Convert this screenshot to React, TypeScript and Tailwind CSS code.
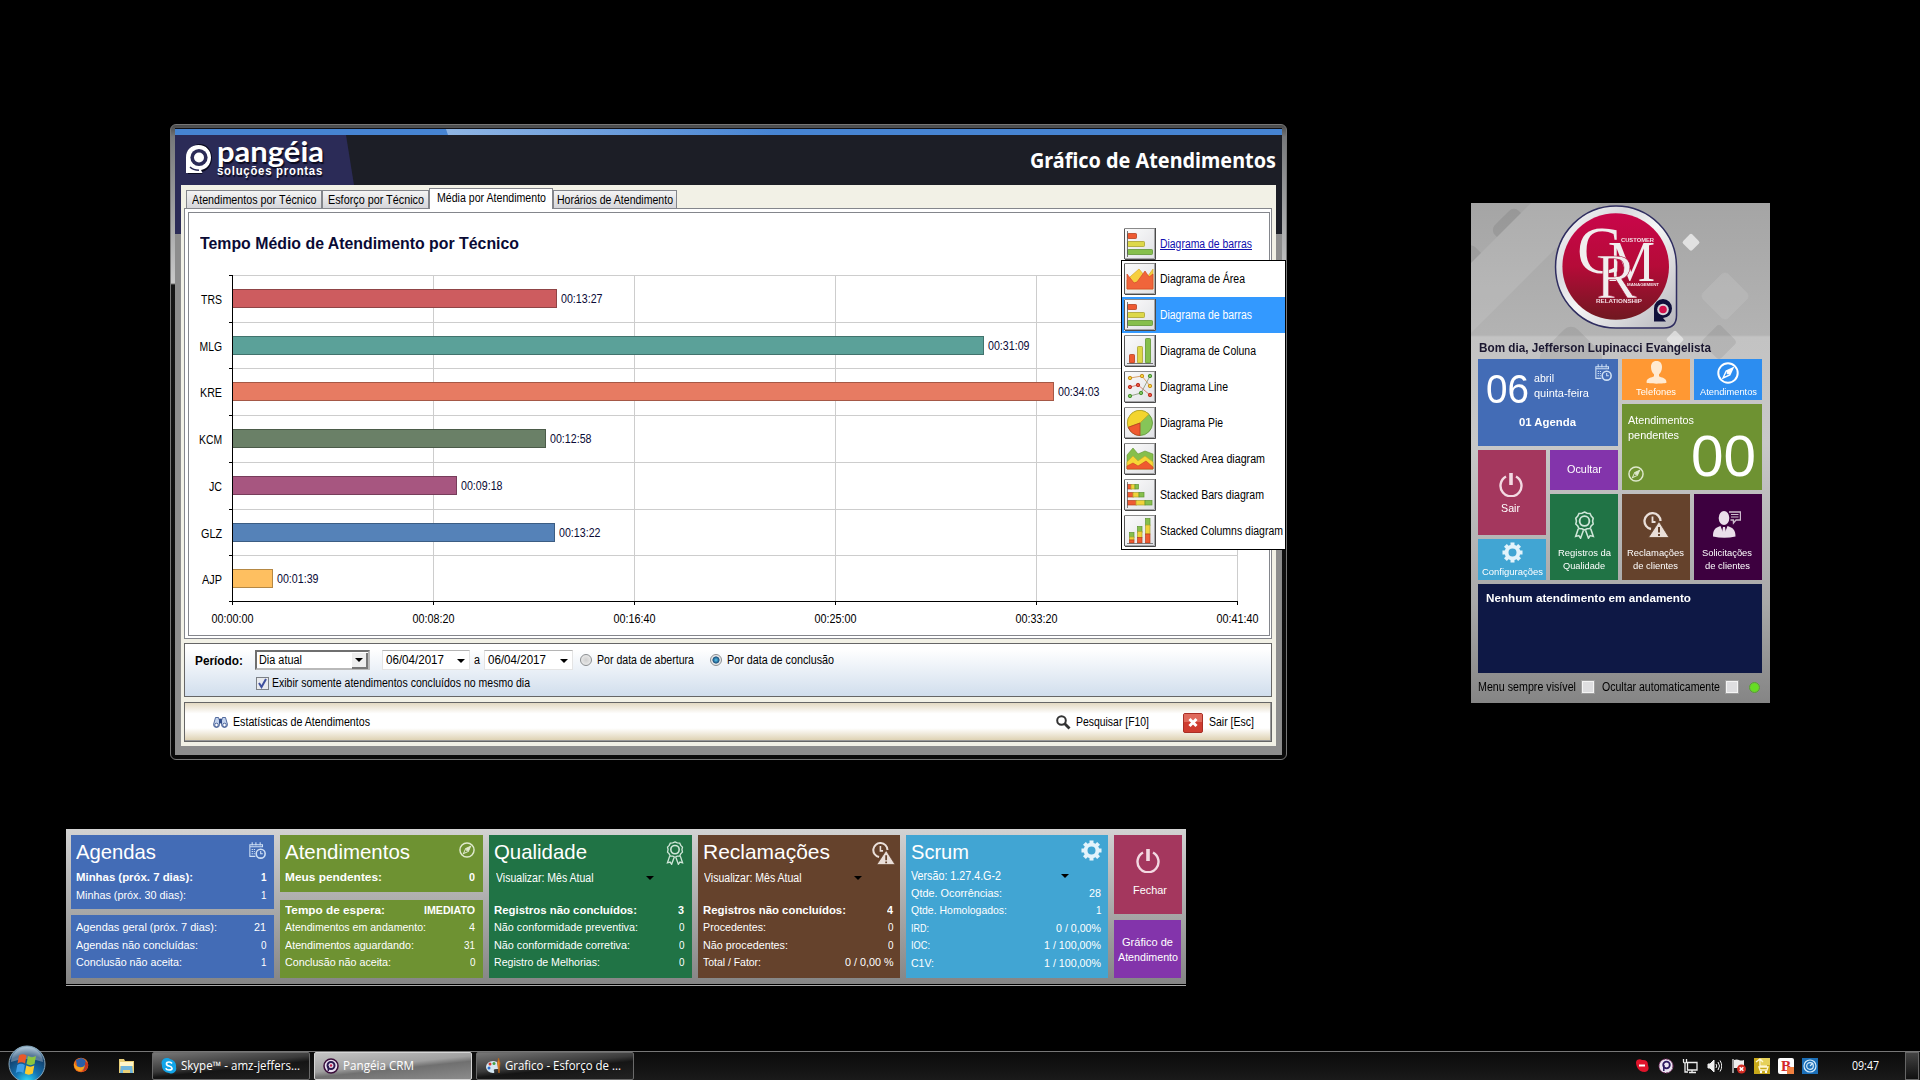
import React, { useLayoutEffect, useRef } from "react";

/* Text squeezed or stretched horizontally to an exact width */
function Fit({ w, className = "", children }: { w: number; className?: string; children: React.ReactNode }) {
  const ref = useRef<HTMLSpanElement>(null);
  useLayoutEffect(() => {
    const el = ref.current;
    if (!el) return;
    el.style.transform = "none";
    const natural = el.getBoundingClientRect().width;
    el.style.transform = `scaleX(${w / natural})`;
  }, [w, children]);
  return (
    <span className={"inline-block shrink-0 whitespace-nowrap text-left " + className} style={{ width: w }}>
      <span ref={ref} className="inline-block origin-left">
        {children}
      </span>
    </span>
  );
}

type Kind = "area" | "bars" | "columns" | "line" | "pie" | "sarea" | "sbars" | "scolumns";

const R = "#ee5a32";
const Y = "#f1d23a";
const G = "#86bf4c";

function ChartGlyph({ kind }: { kind: Kind }) {
  switch (kind) {
    case "area":
      return (
        <g strokeWidth="0.7">
          <path d="M3 26V17l4-4 8-7 5 6 4 1 5-7v20z" fill="#f6cf3f" stroke="#d9a92c" />
          <path d="M3 26V11l7 9 3-1 8-11 4 6 4-3v15z" fill="#f0653a" stroke="#d4472a" />
        </g>
      );
    case "bars":
      return (
        <g strokeWidth="0.8">
          <rect x="3.500" y="5.500" width="9" height="5" rx="0.800" fill={R} stroke="#b5401f" />
          <rect x="3.500" y="13.500" width="17" height="5" rx="0.800" fill="#ddd848" stroke="#a9a12f" />
          <rect x="3.500" y="21.500" width="25" height="5" rx="0.800" fill={G} stroke="#5f9433" />
          <path d="M3.500 3v26" stroke="#555" />
        </g>
      );
    case "columns":
      return (
        <g strokeWidth="0.8">
          <rect x="5.500" y="19.500" width="5" height="8.500" rx="0.800" fill={R} stroke="#b5401f" />
          <rect x="13.500" y="11.500" width="5" height="16.500" rx="0.800" fill="#ddd848" stroke="#a9a12f" />
          <rect x="21.500" y="3.500" width="5" height="24.500" rx="0.800" fill={G} stroke="#5f9433" />
          <path d="M3 28.500h26" stroke="#555" />
        </g>
      );
    case "line":
      return (
        <g strokeWidth="1" fill="none">
          <path d="M6 7l12-2 8 10" stroke="#d9a16a" />
          <path d="M6 16l8-2 12 10" stroke="#d98476" />
          <path d="M6 25l11-3 9-17" stroke="#9aa58d" />
          <g fill={Y} stroke="#c98f1f"><circle cx="6" cy="7" r="1.700" /><circle cx="18" cy="5" r="1.700" /><circle cx="26" cy="15" r="1.700" /></g>
          <g fill="#e7513d" stroke="#bb3527"><circle cx="6" cy="16" r="1.700" /><circle cx="14" cy="14" r="1.700" /><circle cx="26" cy="24" r="1.700" /></g>
          <g fill="#7cc15c" stroke="#4b9333"><circle cx="6" cy="25" r="1.700" /><circle cx="17" cy="22" r="1.700" /><circle cx="26" cy="5" r="1.700" /></g>
        </g>
      );
    case "pie":
      return (
        <g strokeWidth="0.8">
          <circle cx="16" cy="16" r="12.500" fill="#86c558" stroke="#5b8f34" />
          <path d="M16 16L4.200 20.300A12.500 12.500 0 0 1 25 7.300z" fill="#f3d52f" stroke="#b8a12a" />
          <path d="M16 16v12.500A12.500 12.500 0 0 1 4.200 20.300z" fill="#ef5a30" stroke="#b5401f" />
        </g>
      );
    case "sarea":
      return (
        <g strokeWidth="0.6">
          <path d="M3 26V12l6-7 5 6 7-3 8 3v15z" fill="#86bf4c" stroke="#5f9433" />
          <path d="M3 26v-7l6-6 5 5 7-5 8 6v7z" fill="#f6d736" stroke="#c9a52a" />
          <path d="M3 26v-3l6-3 5 3 8-5 7 6v2z" fill="#ef5a30" stroke="#c6431f" />
        </g>
      );
    case "sbars":
      return (
        <g strokeWidth="0.7">
          <rect x="3.500" y="5.500" width="4" height="4.500" fill={R} stroke="#b5401f" /><rect x="7" y="5.500" width="4" height="4.500" fill={Y} stroke="#a9a12f" /><rect x="11" y="5.500" width="3.500" height="4.500" fill={G} stroke="#5f9433" />
          <rect x="3.500" y="13.500" width="6" height="4.500" fill={R} stroke="#b5401f" /><rect x="9" y="13.500" width="6" height="4.500" fill={Y} stroke="#a9a12f" /><rect x="15" y="13.500" width="5" height="4.500" fill={G} stroke="#5f9433" />
          <rect x="3.500" y="21.500" width="9" height="4.500" fill={R} stroke="#b5401f" /><rect x="12" y="21.500" width="9" height="4.500" fill={Y} stroke="#a9a12f" /><rect x="21" y="21.500" width="7" height="4.500" fill={G} stroke="#5f9433" />
          <path d="M3.500 3v26" stroke="#555" />
        </g>
      );
    case "scolumns":
      return (
        <g strokeWidth="0.7">
          <rect x="5.500" y="17.500" width="4.500" height="5" fill={G} stroke="#5f9433" /><rect x="5.500" y="22" width="4.500" height="3" fill={Y} stroke="#a9a12f" /><rect x="5.500" y="25" width="4.500" height="3" fill={R} stroke="#b5401f" />
          <rect x="13.500" y="11.500" width="4.500" height="6" fill={G} stroke="#5f9433" /><rect x="13.500" y="16.500" width="4.500" height="6" fill={Y} stroke="#a9a12f" /><rect x="13.500" y="22.500" width="4.500" height="5.500" fill={R} stroke="#b5401f" />
          <rect x="21.500" y="3.500" width="4.500" height="7" fill={G} stroke="#5f9433" /><rect x="21.500" y="10" width="4.500" height="9" fill={Y} stroke="#a9a12f" /><rect x="21.500" y="19" width="4.500" height="9" fill={R} stroke="#b5401f" />
          <path d="M3 28.500h26" stroke="#555" />
        </g>
      );
  }
}

function ChartIcon({ kind }: { kind: Kind }) {
  return (
    <svg viewBox="0 0 32 32" className="size-8 shrink-0 bg-linear-to-br from-[#fcfcfc] to-[#dfe0e4]">
      <ChartGlyph kind={kind} />
      <path d="M0.500 31V0.500H31.500" fill="none" stroke="#8a8a8a" />
      <path d="M0.500 1V31" stroke="#555" />
      <path d="M31.500 0V31.500H1" fill="none" stroke="#4a4a4a" />
      <path d="M30.500 1V30.500H1" fill="none" stroke="#a5a5a8" />
    </svg>
  );
}

const MENU: { kind: Kind; label: string; w: number }[] = [
  { kind: "area", label: "Diagrama de Área", w: 85 },
  { kind: "bars", label: "Diagrama de barras", w: 92 },
  { kind: "columns", label: "Diagrama de Coluna", w: 96 },
  { kind: "line", label: "Diagrama Line", w: 68 },
  { kind: "pie", label: "Diagrama Pie", w: 63 },
  { kind: "sarea", label: "Stacked Area diagram", w: 105 },
  { kind: "sbars", label: "Stacked Bars diagram", w: 104 },
  { kind: "scolumns", label: "Stacked Columns diagram", w: 123 },
];

const BARS = [
  { id: "TRS", t: "00:13:27", s: 807, fill: "#cd5c5f", line: "#8f4446", lw: 21 },
  { id: "MLG", t: "00:31:09", s: 1869, fill: "#5ba199", line: "#41736d", lw: 22.5 },
  { id: "KRE", t: "00:34:03", s: 2043, fill: "#e77b62", line: "#a55846", lw: 22 },
  { id: "KCM", t: "00:12:58", s: 778, fill: "#6a8067", line: "#4b5b49", lw: 23 },
  { id: "JC", t: "00:09:18", s: 558, fill: "#a75680", line: "#773d5b", lw: 13 },
  { id: "GLZ", t: "00:13:22", s: 802, fill: "#5582b8", line: "#3c5d83", lw: 21 },
  { id: "AJP", t: "00:01:39", s: 99, fill: "#febf60", line: "#b58844", lw: 20 },
];
const ROW_Y = [275.5, 322.5, 368.5, 415.5, 462.5, 509.5, 555.5, 601.5];
const TICKS = ["00:00:00", "00:08:20", "00:16:40", "00:25:00", "00:33:20", "00:41:40"];

function BarChart() {
  return (
    <svg width="1080" height="373" viewBox="189 262 1080 373" className="block font-['Liberation_Sans',sans-serif] text-[12.5px]">
      {ROW_Y.slice(0, 7).map((y) => <path key={y} d={`M233 ${y}H1238`} stroke="#cdcdcd" />)}
      {TICKS.slice(1).map((t, i) => <path key={t} d={`M${433.5 + i * 201} 275V601`} stroke="#cdcdcd" />)}
      {ROW_Y.map((y) => <path key={y} d={`M229 ${y}H233`} stroke="#000" />)}
      {TICKS.map((t, i) => <path key={t} d={`M${232.5 + i * 201} 601V605`} stroke="#000" />)}
      {BARS.map((b, i) => {
        const len = Math.round((b.s * 201) / 500);
        const mid = (ROW_Y[i] + ROW_Y[i + 1]) / 2;
        const top = Math.floor(mid - 9.5) + 0.5;
        return (
          <g key={b.id}>
            <rect x="232.5" y={top} width={len} height="18" fill={b.fill} stroke={b.line} />
            <text x={232 + len + 5} y={top + 13.5} textLength="41.5" lengthAdjust="spacingAndGlyphs" fill="#0a0a35">{b.t}</text>
            <text x={222 - b.lw} y={top + 14} textLength={b.lw} lengthAdjust="spacingAndGlyphs">{b.id}</text>
          </g>
        );
      })}
      <path d="M232.5 275V602M229 601.5H1238" stroke="#000" />
      {TICKS.map((t, i) => (
        <text key={t} x={211.5 + i * 201} y="623" textLength="42" lengthAdjust="spacingAndGlyphs">{t}</text>
      ))}
    </svg>
  );
}

function Caret({ className = "" }: { className?: string }) {
  return (
    <svg width="8" height="4" viewBox="0 0 8 4" className={"shrink-0 " + className}>
      <path d="M0 0h8L4 4z" fill="#000" />
    </svg>
  );
}

function PangeiaLogo() {
  return (
    <div className="flex items-start">
      <svg width="27" height="32" viewBox="0 0 27 32" className="mt-2">
        <path d="M2 31V15a12 14 0 1 1 12 14l3 2z" fill="#0b0b20" />
        <path d="M0 30V14.5C0 7 5 2 12.5 2S25 7.5 25 14.5 20 26.5 15 27l1.500 3z" fill="#fff" />
        <circle cx="13" cy="14.500" r="8.600" fill="#2b2b57" />
        <path d="M4 24q3 3 9 3.200" stroke="#2b2b57" strokeWidth="1.500" fill="none" />
        <circle cx="13" cy="14.500" r="5" fill="#fff" />
      </svg>
      <div className="ml-1 flex flex-col text-white [text-shadow:1px_2px_1px_#0b0b20]">
        <Fit w={107} className="-mt-[2px] h-[29px] font-['Lato',sans-serif] text-[28px] leading-[36px] font-bold">pangéia</Fit>
        <Fit w={106} className="h-4 font-['Liberation_Sans',sans-serif] text-[12px] leading-[18px] font-bold tracking-[0.8px]">soluções prontas</Fit>
      </div>
    </div>
  );
}

function Tab({ label, w, width }: { label: string; w: number; width: string }) {
  return (
    <div className={"flex h-[19px] items-center justify-center border border-[#84868c] bg-linear-to-b from-[#f4f4f4] to-[#d6d6da] pt-px " + width}>
      <Fit w={w}>{label}</Fit>
    </div>
  );
}

function DateField({ w }: { w: string }) {
  return (
    <div className={"flex h-5 items-center justify-between border border-[#e4e4e4] border-t-[#b5b5b5] bg-white pr-1 pl-[3px] " + w}>
      <Fit w={58}>06/04/2017</Fit>
      <Caret className="mt-0.5" />
    </div>
  );
}

function ChartWindow() {
  return (
    <section className="absolute top-[124px] left-[170px] h-[636px] w-[1117px] rounded-[6px] border border-[#777] bg-[linear-gradient(#48494a_0,#77797b_12px,#c9c9c9_158px,#151515_160px,#0a0a0a)] p-1 pt-[3px] text-[12.5px] leading-[15px] text-black">
      <div className="h-[627px] border-t border-[#101015]">
        <div className="flex h-[6px] bg-[#4684d2]">
          <div className="ml-[271px] w-[330px] bg-linear-to-r from-[#8fb5e3] to-[#4684d2] [clip-path:polygon(0_0,100%_0,100%_100%,2px_100%)]" />
        </div>
        <header className="flex h-[50px] items-start justify-between bg-[#1c1e26] pr-[6px]">
          <div className="h-full w-[179px] bg-[#2b2b57] pl-[11px] [clip-path:polygon(0_0,171px_0,179px_100%,0_100%)]">
            <PangeiaLogo />
          </div>
          <Fit w={246} className="mt-[11px] font-['Noto_Sans',sans-serif] text-[21px] leading-[28px] font-bold text-white">Gráfico de Atendimentos</Fit>
        </header>
        <div className="bg-[linear-gradient(to_right,#2b2b57_50%,#1c1e26_50%)]">
          <div className="bg-[linear-gradient(transparent_49px,#8d8d8d_49px)] px-[6px] pb-[9px]">
            <div className="h-[561px] bg-[#f2f1e6] pl-[3px]">
              <div className="flex h-[24px] items-end pl-[2px]">
                <Tab label="Atendimentos por Técnico" w={124.5} width="w-[136px]" />
                <Tab label="Esforço por Técnico" w={96} width="w-[107px]" />
                <div className="relative z-10 flex h-[21px] w-[124px] items-start justify-center border border-b-0 border-[#84868c] bg-white pt-[2px]">
                  <Fit w={109}>Média por Atendimento</Fit>
                </div>
                <Tab label="Horários de Atendimento" w={116} width="w-[124px]" />
              </div>
              <div className="-mt-px h-[431px] w-[1088px] border border-[#84868c] bg-white p-[3px] pr-px">
                <div className="h-[424px] w-[1082px] border border-[#84868c]">
                  <div className="flex h-[49px] items-start justify-between pr-[17px] pl-[11px]">
                    <Fit w={319} className="mt-[20px] text-[16.5px] leading-[20px] font-bold text-[#0a0a35]">Tempo Médio de Atendimento por Técnico</Fit>
                    <div className="mt-[15px] flex items-center gap-1">
                      <ChartIcon kind="bars" />
                      <Fit w={92} className="text-[#1010b0] [&>span]:underline">Diagrama de barras</Fit>
                    </div>
                  </div>
                  <BarChart />
                </div>
              </div>
              <div className="mt-1 h-[54px] w-[1088px] border border-[#666] bg-linear-to-b from-white from-10% to-[#d1deed] pl-[10px]">
                <div className="mt-[6px] flex h-5 items-center">
                  <Fit w={48} className="mt-0.5 font-bold">Período:</Fit>
                  <div className="ml-3 flex h-5 w-[115px] items-center justify-between border-2 border-[#b9b9b9] border-t-[#6f6f6f] border-l-[#6f6f6f] bg-white pt-px pl-[2px]">
                    <Fit w={43}>Dia atual</Fit>
                    <span className="flex h-4 w-4 items-center justify-center border-r-2 border-b-2 border-[#777] bg-[#eee]"><Caret /></span>
                  </div>
                  <div className="ml-3 flex items-center">
                    <DateField w="w-[88px]" />
                    <Fit w={6} className="mx-[4px]">a</Fit>
                    <DateField w="w-[89px]" />
                  </div>
                  <span className="ml-[7px] size-3 rounded-full border border-[#8a8d90] bg-[radial-gradient(#cfcfcf,#f2f2f2)]" />
                  <Fit w={97} className="ml-[5px]">Por data de abertura</Fit>
                  <span className="ml-4 size-3 rounded-full border border-[#8a8d90] bg-[radial-gradient(#58c8f0_0,#1a4f7c_45%,#e8e8e8_55%)]" />
                  <Fit w={107} className="ml-[5px]">Por data de conclusão</Fit>
                </div>
                <div className="mt-[6px] flex items-center pl-[61px]">
                  <span className="size-[13px] border border-[#7b8086] bg-[#e8eaee]">
                    <svg viewBox="0 0 11 11" className="size-[11px]"><path d="M2 5l2.500 4L9 1" stroke="#3d4f9d" strokeWidth="2" fill="none" /></svg>
                  </span>
                  <Fit w={258} className="ml-[3px]">Exibir somente atendimentos concluídos no mesmo dia</Fit>
                </div>
              </div>
              <footer className="mt-[5px] flex h-10 w-[1088px] items-center border border-[#666] bg-[linear-gradient(#e3d9c2,#fff_28%,#fff_66%,#dccfae)] pt-px pr-[17px] pl-[28px] shadow-[inset_-1px_-1px_#999]">
                <svg width="15" height="13" viewBox="0 0 15 13" fill="#c3d3ee" stroke="#2e4a86" strokeWidth="0.800">
                  <path d="M2.500 1.500h3l1 3v4a3 3 0 1 1-6 0zM9.500 1.500h3l2 7a3 3 0 1 1-6 0v-4z" />
                  <circle cx="3.500" cy="9" r="1.800" fill="#fff" /><circle cx="11.500" cy="9" r="1.800" fill="#fff" />
                  <path d="M6.500 3h2v4h-2z" fill="#2e4a86" />
                </svg>
                <Fit w={137} className="ml-[5px]">Estatísticas de Atendimentos</Fit>
                <svg width="15" height="15" viewBox="0 0 15 15" fill="none" stroke="#333" className="ml-auto">
                  <circle cx="5.500" cy="5.500" r="4.300" strokeWidth="2" /><path d="M8.500 8.500l5 5" strokeWidth="2.800" />
                </svg>
                <Fit w={73} className="ml-[5px]">Pesquisar [F10]</Fit>
                <svg width="20" height="20" viewBox="0 0 20 20" className="ml-[34px]">
                  <rect x="0.500" y="0.500" width="19" height="19" rx="1.500" fill="#cf3c30" stroke="#a82f26" />
                  <path d="M1 1h18v8H1z" fill="#e06a5c" />
                  <path d="M6.500 6l7 7M13.500 6l-7 7" stroke="#fff" strokeWidth="3" />
                </svg>
                <Fit w={45} className="ml-[6px]">Sair [Esc]</Fit>
              </footer>
            </div>
          </div>
        </div>
      </div>
      <ul className="absolute top-[135px] left-[950px] z-20 w-[165px] border border-black bg-white">
        {MENU.map((m) => (
          <li key={m.kind} className={"flex h-9 items-center gap-1 pl-[2px] " + (m.kind === "bars" ? "bg-[#3399ff] text-white" : "")}>
            <ChartIcon kind={m.kind} />
            <Fit w={m.w}>{m.label}</Fit>
          </li>
        ))}
      </ul>
    </section>
  );
}

/* ---- tile icons ---- */
type IconProps = { className: string };

const CalendarClock = ({ className }: IconProps) => (
  <svg viewBox="0 0 16 16" className={className} fill="none" stroke="#cfe0f5">
    <path d="M6 13.500H.8V2.500h11.900V5M3 .3v3M6.500.3v3M10.500.3v3M.8 4.500h11.900" strokeWidth="1" />
    <path d="M2.500 7h4M2.500 9h3M2.500 11h3" strokeDasharray="1.200 .8" />
    <circle cx="11" cy="11" r="4.200" strokeWidth="1.500" /><path d="M11 8.500V11h2" />
  </svg>
);
const Compass = ({ className }: IconProps) => (
  <svg viewBox="0 0 22 22" className={className} fill="none" stroke="currentColor">
    <circle cx="11" cy="11" r="9.700" strokeWidth="2" />
    <path d="M16 6l-3.200 7L6 16l3.200-7z" strokeWidth="1.400" /><path d="M16 6l-3.200 7-3.600-4z" fill="currentColor" stroke="none" /><circle cx="11" cy="11" r="1" fill="currentColor" />
  </svg>
);
const Power = ({ className }: IconProps) => (
  <svg viewBox="0 0 24 24" className={className} fill="none" stroke="#f3d9e2" strokeWidth="2.400">
    <path d="M7 3.500a10.500 10.500 0 1 0 10 0" /><path d="M12 0v12" strokeWidth="3.600" />
  </svg>
);
const Gear = ({ className }: IconProps) => (
  <svg viewBox="0 0 22 22" className={className} fill="none" stroke="#e3f3fb">
    <circle cx="11" cy="11" r="6.200" strokeWidth="4" />
    {[0, 45, 90, 135, 180, 225, 270, 315].map((a) => (
      <path key={a} d="M11 .5v4" strokeWidth="4.200" transform={`rotate(${a} 11 11)`} />
    ))}
  </svg>
);
const Ribbon = ({ className }: IconProps) => (
  <svg viewBox="0 0 20 27" className={className} fill="none" stroke="#cfe6d8" strokeWidth="1.500">
    <path d="M10 1l2.500 1.200 2.800.2 1.200 2.500 1.900 2-.6 2.800.6 2.800-2 2-1.100 2.400-2.800.2L10 18.300l-2.500-1.200-2.800-.2-1.200-2.400-1.900-2 .6-2.800-.6-2.800 1.900-2L4.700 2.400l2.800-.2z" />
    <circle cx="10" cy="9.700" r="4.700" strokeWidth="1.800" />
    <path d="M4 17l-2.500 7.500 3-.8 1.700 2.500L9 18.500M16 17l2.500 7.500-3-.8-1.700 2.500L11 18.500" />
  </svg>
);
const ClockWarning = ({ className }: IconProps) => (
  <svg viewBox="0 0 26 26" className={className}>
    <path d="M8 17A8 8 0 1 1 17.500 9" fill="none" stroke="#eadfd9" strokeWidth="2.300" />
    <path d="M9.500 4.500V10h3" fill="none" stroke="#eadfd9" strokeWidth="1.800" />
    <path d="M16 9.500L26 25.500H5.500z" fill="#eadfd9" stroke="#65422c" strokeWidth="0.800" />
    <path d="M16 15v5.500M16 22v2" stroke="#65422c" strokeWidth="2" />
  </svg>
);
const Person = ({ className }: IconProps) => (
  <svg viewBox="0 0 21 23" className={className} fill="#ffead2">
    <path d="M10.500 0c4 0 5.500 2.700 5.500 6 0 3-1.200 6-3 7.300v2c2 1.500 7.500 1.200 7.500 6.200 0 1.500-20 1.500-20 0 0-5 5.500-4.700 7.500-6.200v-2C6.200 12 5 9 5 6c0-3.300 1.500-6 5.500-6z" />
  </svg>
);
const Client = ({ className }: IconProps) => (
  <svg viewBox="0 0 28 27" className={className} fill="#eadfea">
    <ellipse cx="11" cy="7" rx="5.300" ry="7" />
    <path d="M0 25.500c0-7 2-8.500 7.500-10.500l3.500 9 3.500-9c5.500 2 8 3.500 8 10.500q-11 2.500-22.500 0z" />
    <path d="M10 16h2l1 6-2 3-2-3z" />
    <path d="M16 1h11.500v8H23l-2.500 3-.2-3h-2.800" fill="none" stroke="#cdbccd" strokeWidth="1.400" />
    <path d="M18 3.500h7.500M18 6h7.500" stroke="#cdbccd" />
  </svg>
);

function CrmLogo() {
  return (
    <svg width="124" height="124" viewBox="1554 204.500 124 124" className="mt-px ml-[83px] block">
      <defs>
        <linearGradient id="crmRed" x1="0" y1="0" x2="0" y2="1"><stop offset="0" stopColor="#c9064a" /><stop offset=".5" stopColor="#b50b38" /><stop offset="1" stopColor="#701820" /></linearGradient>
        <linearGradient id="crmSilver" x1="0" y1="0" x2="1" y2="1"><stop offset="0" stopColor="#fff" /><stop offset=".3" stopColor="#d9d9de" /><stop offset=".5" stopColor="#f6f6f6" /><stop offset="1" stopColor="#b5b5bb" /></linearGradient>
      </defs>
      <path d="M1616 205.500A60.500 60.500 0 0 1 1676.500 266V315Q1676.500 327.500 1664 327.500H1616A60.500 61 0 0 1 1616 205.500z" fill="url(#crmSilver)" stroke="#2f2d60" strokeWidth="1.500" />
      <circle cx="1615.700" cy="266" r="53.300" fill="url(#crmRed)" />
      <g fill="#f1eeee" className="font-['Liberation_Serif',serif]">
        <text x="1577" y="272" fontSize="68" textLength="44" lengthAdjust="spacingAndGlyphs">C</text>
        <text x="1608" y="280" fontSize="56" textLength="47" lengthAdjust="spacingAndGlyphs">M</text>
        <text x="1596" y="297" fontSize="64" textLength="41" lengthAdjust="spacingAndGlyphs" stroke="#a80c35" strokeWidth="0.600">R</text>
      </g>
      <g fill="#f3dfe4" className="font-['Liberation_Sans',sans-serif] font-bold">
        <text x="1621" y="241" fontSize="4.500" textLength="33" lengthAdjust="spacingAndGlyphs">CUSTOMER</text>
        <text x="1627" y="285.500" fontSize="3.600" textLength="32" lengthAdjust="spacingAndGlyphs">MANAGEMENT</text>
        <text x="1596" y="302" fontSize="4.500" textLength="46" lengthAdjust="spacingAndGlyphs">RELATIONSHIP</text>
      </g>
      <path d="M1654 321v-13a9 9.500 0 1 1 9 9.500l3 3.500z" fill="#10103a" />
      <circle cx="1663" cy="309" r="5.800" fill="#d7d7dc" /><circle cx="1663" cy="309" r="3.800" fill="#d2124c" />
    </svg>
  );
}

function Checkbox() {
  return <span className="size-3 shrink-0 border border-[#f5f5f5] bg-[#dedee0] outline outline-[#a0a0a0]" />;
}

function SidePanel() {
  return (
    <aside className="absolute top-[203px] left-[1471px] h-[500px] w-[299px] overflow-hidden bg-[linear-gradient(#a5a5a5_0,#b3b3b3_132px,#c3c3c3_134px,#c8c8c8_240px,#a8a8a8_400px,#858585_500px)] text-white">
      <svg width="299" height="500" className="absolute inset-0" fill="#fff">
        <g opacity=".1">
          <rect x="26" y="10" width="34" height="34" rx="7" transform="rotate(45 43 27)" fill="#222" />
          <rect x="-18" y="46" width="34" height="34" rx="8" transform="rotate(45 -1 63)" fill="#222" />
          <rect x="6" y="77" width="13" height="13" rx="2" transform="rotate(45 12 84)" fill="#000" />
          <rect x="236" y="75" width="36" height="36" rx="5" transform="rotate(45 254 93)" />
          <rect x="75" y="130" width="50" height="50" rx="10" transform="rotate(45 100 155)" fill="#333" />
          <rect x="235" y="126" width="26" height="26" rx="4" transform="rotate(45 248 139)" fill="#333" />
          <path d="M0 60L60 0h70L0 130z" />
        </g>
        <rect x="213" y="33" width="13" height="13" rx="2" transform="rotate(45 220 40)" opacity=".65" />
        <rect x="197" y="130" width="13" height="13" rx="2" transform="rotate(45 204 137)" opacity=".5" />
      </svg>
      <div className="relative">
        <div className="h-[134px] pt-px"><CrmLogo /></div>
        <Fit w={232} className="ml-2 block! h-[22px] text-[13.5px] leading-[22px] font-bold text-[#1b1730]">Bom dia, Jefferson Lupinacci Evangelista</Fit>
        <div className="ml-[7px] grid w-[284px] grid-cols-4 grid-rows-[41px_42px_40px_41px_41px_89px] gap-1">
          <div className="relative col-span-2 row-span-2 bg-[#436cb6]">
            <div className="flex items-center pt-[11px] pl-2">
              <Fit w={43} className="text-[40px] leading-[38px]">06</Fit>
              <div className="-mt-[6px] ml-[5px] flex flex-col text-[11.5px] leading-[15px]">
                <Fit w={20}>abril</Fit>
                <Fit w={55}>quinta-feira</Fit>
              </div>
            </div>
            <Fit w={57} className="mt-[6px] ml-[41px] block! text-[11.5px] leading-4 font-bold">01 Agenda</Fit>
            <CalendarClock className="absolute top-[5px] right-[6px] size-[17px]" />
          </div>
          <div className="flex flex-col items-center bg-[#ff9833] pt-[2px]">
            <Person className="h-[23px] w-[21px]" />
            <Fit w={40} className="mt-0.5 text-[9.5px] leading-3">Telefones</Fit>
          </div>
          <div className="flex flex-col items-center bg-[#2c8df0] pt-[3px]">
            <Compass className="size-[22px]" />
            <Fit w={57} className="mt-0.5 text-[9.5px] leading-3">Atendimentos</Fit>
          </div>
          <div className="relative col-span-2 row-span-2 bg-[#6e9232] pt-[9px] pl-[6px] text-[11.5px] leading-[15px]">
            <Fit w={66} className="block!">Atendimentos</Fit>
            <Fit w={51} className="block!">pendentes</Fit>
            <Fit w={65} className="absolute right-[6px] bottom-[7px] text-[58px] leading-[54px]">00</Fit>
            <Compass className="absolute bottom-2 left-[6px] size-4 text-[#dfe9cd]" />
          </div>
          <div className="row-span-2 flex flex-col items-center bg-[#a4375e] pt-[23px] pr-[3px]">
            <Power className="size-6" />
            <Fit w={19} className="mt-[3px] text-[11.5px] leading-4">Sair</Fit>
          </div>
          <div className="flex items-center justify-center bg-[#8334ab]">
            <Fit w={35} className="text-[11.5px]">Ocultar</Fit>
          </div>
          <div className="row-span-2 flex flex-col items-center bg-[#207345] pt-[17px] text-[9.5px] leading-[13px]">
            <Ribbon className="h-[28px] w-[21px]" />
            <Fit w={53} className="mt-[7px]">Registros da</Fit>
            <Fit w={42}>Qualidade</Fit>
          </div>
          <div className="row-span-2 flex flex-col items-center bg-[#65422c] pt-[18px] pr-px text-[9.5px] leading-[13px]">
            <ClockWarning className="size-[26px]" />
            <Fit w={57} className="mt-[8px]">Reclamações</Fit>
            <Fit w={45}>de clientes</Fit>
          </div>
          <div className="row-span-2 flex flex-col items-center bg-[#3d003f] pt-[17px] pr-[2px] text-[9.5px] leading-[13px]">
            <Client className="h-[27px] w-[28px]" />
            <Fit w={50} className="mt-[8px]">Solicitações</Fit>
            <Fit w={45}>de clientes</Fit>
          </div>
          <div className="flex flex-col items-center bg-[#41a5d3] pt-[3px]">
            <Gear className="size-[21px]" />
            <Fit w={61} className="mt-[3px] text-[9.5px] leading-3">Configurações</Fit>
          </div>
          <div className="col-span-4 bg-[#0e1845] pt-[6px] pl-2">
            <Fit w={205} className="block! text-[11.5px] leading-4 font-bold">Nenhum atendimento em andamento</Fit>
          </div>
        </div>
        <div className="mt-[6px] ml-[7px] flex items-center text-[12.5px] leading-4 text-black">
          <Fit w={98}>Menu sempre visível</Fit>
          <span className="ml-[6px] flex"><Checkbox /></span>
          <Fit w={118} className="ml-[8px]">Ocultar automaticamente</Fit>
          <span className="ml-[6px] flex"><Checkbox /></span>
          <span className="ml-3 size-[9px] rounded-full bg-[#66dd22] outline outline-[#55a52c]" />
        </div>
      </div>
    </aside>
  );
}

type Line = { l: string; w: number; v?: string; vw?: number; bold?: boolean };

function Rows({ lines, className = "" }: { lines: Line[]; className?: string }) {
  return (
    <div className={"flex flex-col text-[11.5px] leading-[17.5px] " + className}>
      {lines.map((r) => (
        <div key={r.l} className={"flex justify-between " + (r.bold ? "font-bold" : "")}>
          <Fit w={r.w}>{r.l}</Fit>
          {r.v && <Fit w={r.vw ?? 5.5}>{r.v}</Fit>}
        </div>
      ))}
    </div>
  );
}

function TileHead({ title, w, children }: { title: string; w: number; children: React.ReactNode }) {
  return (
    <div className="flex h-[33px] items-start justify-between">
      <Fit w={w} className="mt-1 text-[21px] leading-[26px]">{title}</Fit>
      {children}
    </div>
  );
}

function Select({ label, w, gap }: { label: string; w: number; gap: string }) {
  return (
    <div className="flex items-center text-[12.5px] leading-4">
      <Fit w={w}>{label}</Fit>
      <Caret className={gap} />
    </div>
  );
}

function StatusBar() {
  return (
    <section className="absolute top-[829px] left-[66px] flex h-[155px] w-[1120px] items-start gap-[6px] bg-linear-to-b from-[#d2d2d2] to-[#858585] pt-[6px] pl-[5px] text-white shadow-[0_1px_#000,0_2px_#aaa]">
      <div className="flex w-[203px] flex-col gap-[6px]">
        <div className="h-[74px] bg-[#436cb6] px-[5px] pr-2">
          <TileHead title="Agendas" w={80}><CalendarClock className="mt-[7px] size-[17px]" /></TileHead>
          <Rows className="mt-px" lines={[{ l: "Minhas (próx. 7 dias):", w: 117, v: "1", bold: true }, { l: "Minhas (próx. 30 dias):", w: 110, v: "1" }]} />
        </div>
        <div className="h-[63px] bg-[#436cb6] px-[5px] pt-[4px] pr-2">
          <Rows lines={[{ l: "Agendas geral (próx. 7 dias):", w: 141, v: "21", vw: 12 }, { l: "Agendas não concluídas:", w: 122, v: "0" }, { l: "Conclusão não aceita:", w: 106, v: "1" }]} />
        </div>
      </div>
      <div className="flex w-[203px] flex-col gap-2">
        <div className="h-[57px] bg-[#6e9232] px-[5px] pr-2">
          <TileHead title="Atendimentos" w={125}><Compass className="mt-[7px] size-4 text-[#dfe9cd]" /></TileHead>
          <Rows className="mt-px" lines={[{ l: "Meus pendentes:", w: 97, v: "0", vw: 6, bold: true }]} />
        </div>
        <div className="h-[78px] bg-[#6e9232] px-[5px] pt-[1.5px] pr-2">
          <Rows lines={[{ l: "Tempo de espera:", w: 100, v: "IMEDIATO", vw: 51, bold: true }, { l: "Atendimentos em andamento:", w: 141, v: "4", vw: 6 }, { l: "Atendimentos aguardando:", w: 129, v: "31", vw: 11 }, { l: "Conclusão não aceita:", w: 106, v: "0" }]} />
        </div>
      </div>
      <div className="h-[143px] w-[203px] bg-[#207345] px-[5px] pr-2">
        <TileHead title="Qualidade" w={93}><Ribbon className="mt-[6px] h-6 w-[18px]" /></TileHead>
        <div className="mt-[2px] pl-[2px]"><Select label="Visualizar: Mês Atual" w={97.5} gap="ml-[52px]" /></div>
        <Rows className="mt-[15.5px]" lines={[{ l: "Registros não concluídos:", w: 143, v: "3", vw: 6, bold: true }, { l: "Não conformidade preventiva:", w: 144, v: "0" }, { l: "Não conformidade corretiva:", w: 136, v: "0" }, { l: "Registro de Melhorias:", w: 106, v: "0" }]} />
      </div>
      <div className="h-[143px] w-[202px] bg-[#65422c] px-[5px] pr-[7px]">
        <TileHead title="Reclamações" w={127}><ClockWarning className="mt-[7px] -mr-0.5 size-[23px]" /></TileHead>
        <div className="mt-[2px] pl-px"><Select label="Visualizar: Mês Atual" w={97.5} gap="ml-[52px]" /></div>
        <Rows className="mt-[15.5px]" lines={[{ l: "Registros não concluídos:", w: 143, v: "4", vw: 6, bold: true }, { l: "Procedentes:", w: 63, v: "0" }, { l: "Não procedentes:", w: 85, v: "0" }, { l: "Total / Fator:", w: 58, v: "0 / 0,00 %", vw: 48.5 }]} />
      </div>
      <div className="h-[143px] w-[202px] bg-[#41a5d3] px-[5px] pr-[7px]">
        <TileHead title="Scrum" w={58}><Gear className="mt-[5px] -mr-px size-[21px]" /></TileHead>
        <Select label="Versão: 1.27.4.G-2" w={90} gap="ml-[60px]" />
        <Rows className="mt-[0.5px]" lines={[{ l: "Qtde. Ocorrências:", w: 91, v: "28", vw: 12 }, { l: "Qtde. Homologados:", w: 96, v: "1" }, { l: "IRD:", w: 18, v: "0 / 0,00%", vw: 45 }, { l: "IOC:", w: 19, v: "1 / 100,00%", vw: 57 }, { l: "C1V:", w: 23, v: "1 / 100,00%", vw: 57 }]} />
      </div>
      <div className="flex w-[68px] flex-col gap-[6px] text-[11.5px]">
        <div className="flex h-[79px] flex-col items-center bg-[#a4375e] pt-[14px]">
          <Power className="size-6" />
          <Fit w={34} className="mt-[9px] ml-[3px] leading-4">Fechar</Fit>
        </div>
        <div className="flex h-[58px] w-[67px] flex-col items-center justify-center bg-[#8334ab] pt-0.5 leading-[15px]">
          <Fit w={51}>Gráfico de</Fit>
          <Fit w={60}>Atendimento</Fit>
        </div>
      </div>
    </section>
  );
}

function TaskButton({ label, w, active, width, children }: { label: string; w: number; active?: boolean; width: string; children: React.ReactNode }) {
  return (
    <div
      className={
        "flex h-7 items-center gap-1 rounded-[2px] border pl-[8px] " + width + " " +
        (active
          ? "border-[#d5d5d5] bg-[linear-gradient(174deg,#c4c4c4,#a0a0a0_45%,#707070_58%,#8c8c8c)]"
          : "border-[#6a6a6a] bg-[linear-gradient(174deg,#777,#3a3a3a_45%,#151515_58%,#222)]")
      }
    >
      {children}
      <Fit w={w} className="-mt-px text-white">{label}</Fit>
    </div>
  );
}

function Taskbar() {
  return (
    <footer className="absolute bottom-0 left-0 flex h-[29px] w-full items-start border-t border-[#777] bg-linear-to-b from-[#0b0b0b] to-[#1a1a1a] font-['Open_Sans',sans-serif] text-[12px] leading-4">
      <svg width="38" height="38" viewBox="0 0 38 38" className="-mt-[7px] ml-2 shrink-0">
        <defs>
          <radialGradient id="orb" cx=".5" cy="1" r="1"><stop offset="0" stopColor="#2fe0ff" /><stop offset=".35" stopColor="#1575b5" /><stop offset=".75" stopColor="#123f6b" /><stop offset="1" stopColor="#9fc0d6" /></radialGradient>
        </defs>
        <circle cx="19" cy="19" r="18" fill="url(#orb)" stroke="#87a6ba" />
        <path d="M3 17a16 15 0 0 1 32 0q-16-6-32 0z" fill="#fff" opacity=".3" />
        <path d="M11 10.500q4-2.500 7.500 0l-1.500 8q-4-2.300-7.500 0z" fill="#e8592a" />
        <path d="M20 11q4 2.300 8 0l-1.500 8q-4 2.300-8 0z" fill="#8cc63f" />
        <path d="M9.300 20q3.600-2.300 7.500 0l-1.500 8q-4-2.300-7.500 0z" fill="#3f9fe8" />
        <path d="M18.300 20.500q4 2.300 8 0l-1.500 8q-4 2.300-8 0z" fill="#fccb2f" />
      </svg>
      <svg width="16" height="16" viewBox="0 0 16 16" className="mt-[5px] ml-[27px] shrink-0">
        <circle cx="8" cy="8" r="7.300" fill="#e8661b" /><path d="M8 1a6 6 0 0 1 5 4 5 5 0 1 1-9 4L3 3z" fill="#2b5fa8" /><path d="M1 4q0 5 5 6 4 1 6-2-1 6-6 6-6-2-5-10z" fill="#f7a11b" /><path d="M15 6q1 7-6 9 4-4 3-10z" fill="#c8321b" />
      </svg>
      <svg width="17" height="16" viewBox="0 0 17 16" className="mt-[6px] ml-[29px] shrink-0">
        <path d="M1 1h5l1 2h9v12H1z" fill="#e9cf78" /><path d="M2 4h13v4H2z" fill="#fff6c8" /><path d="M3 8h11l1 7h-3v-3H5v3H2z" fill="#6fb6dd" />
      </svg>
      <div className="ml-[17px] flex gap-[4px]">
        <TaskButton label="Skype™ - amz-jeffers..." w={119} width="w-[158px]">
          <svg width="16" height="16" viewBox="0 0 16 16"><path d="M5 0a5 5 0 0 1 4 1 7 7 0 0 1 6 8 5 5 0 0 1-7 6A7 7 0 0 1 1 7 5 5 0 0 1 5 0z" fill="#12a5e8" /><path d="M11 5.500Q10 4 8 4 5.500 4 5.500 5.800T8 8t3 2.200T8 12q-2.500 0-3.200-1.800" stroke="#fff" strokeWidth="1.700" fill="none" /></svg>
        </TaskButton>
        <TaskButton label="Pangéia CRM" w={71} width="w-[158px]" active>
          <svg width="16" height="16" viewBox="0 0 16 16"><circle cx="8" cy="8" r="7" fill="#e9dff0" stroke="#3a0d3a" strokeWidth="1.500" /><circle cx="8" cy="7.500" r="3.500" fill="none" stroke="#2b1a50" strokeWidth="2" /><path d="M5.300 8v5" stroke="#2b1a50" strokeWidth="1.500" /><circle cx="8" cy="7.500" r="1.200" fill="#c3204c" /></svg>
        </TaskButton>
        <TaskButton label="Grafico - Esforço de ..." w={116} width="w-[158px]">
          <svg width="16" height="16" viewBox="0 0 16 16"><path d="M8 3a7 6 0 1 0 0 12q2 0 1-2t2-2h3V6Q12 3 8 3z" fill="#d5e7f2" /><circle cx="5" cy="6" r="1.500" fill="#d8382c" /><circle cx="9" cy="5.500" r="1.500" fill="#44a044" /><circle cx="4" cy="10" r="1.500" fill="#2d6fd0" /><path d="M13.500 0l1.500 5-1 10-1.500-10z" fill="#e88b2b" stroke="#b5641b" strokeWidth=".8" /></svg>
        </TaskButton>
      </div>
      <div className="ml-auto flex h-7 items-center gap-2">
        <svg width="16" height="16" viewBox="0 0 16 16"><path d="M3 2q3-1.500 5 0 6-.5 6 5 2 6-3 7-6 0-8-5-2-5 0-7z" fill="#e0142b" /><path d="M5 7.500h6" stroke="#fff" strokeWidth="2" /></svg>
        <svg width="16" height="16" viewBox="0 0 16 16"><circle cx="8" cy="8" r="7" fill="#ece5f2" stroke="#7b2a63" strokeDasharray="2 1" /><circle cx="8.500" cy="7" r="3.300" fill="none" stroke="#2b1a60" strokeWidth="1.800" /><path d="M5.800 7v6" stroke="#2b1a60" strokeWidth="1.500" /></svg>
        <svg width="16" height="16" viewBox="0 0 16 16" fill="none" stroke="#eee" strokeWidth="1.300"><path d="M5.500 4.500H15v7.500H5.500zM7 14.500h7M10 12v2.500M3 5v9h3M1.500 1v2.500q0 1.500 1.500 1.500t1.500-1.500V1" /></svg>
        <svg width="16" height="16" viewBox="0 0 16 16" fill="none" stroke="#eee"><path d="M2 6h2l4-4v12l-4-4H2z" fill="#eee" /><path d="M10 6q1.500 2 0 4M12 4q3 4 0 8M14 2.500q3.500 5.500 0 11" /></svg>
        <svg width="16" height="16" viewBox="0 0 16 16"><path d="M3 1v14" stroke="#ddd" strokeWidth="1.300" /><path d="M4 2q3-1 5 0t5 0v8H4z" fill="#eee" /><circle cx="11.500" cy="11" r="4.500" fill="#d22b22" /><path d="M9.700 9.200l3.600 3.600M13.300 9.200l-3.600 3.600" stroke="#fff" strokeWidth="1.500" /></svg>
        <svg width="16" height="16" viewBox="0 0 16 16"><path d="M0 0h16v16H0z" fill="#c9a91a" /><path d="M7 0h9v7H7z" fill="#e6d15a" /><path d="M2 4l4-3 3 3M6 2v6h7M5 9h9l-1 3H6z" stroke="#fff8d0" strokeWidth="1.400" fill="none" /><circle cx="7" cy="14" r="1.200" fill="#fff" /><circle cx="12" cy="14" r="1.200" fill="#fff" /></svg>
        <span className="relative flex size-4 items-center justify-center rounded-[2px] bg-white font-['Liberation_Serif',serif] text-[15px] font-bold text-[#d3262c]">
          B<span className="absolute right-0 bottom-0 size-[7px] bg-[#f08040]" />
        </span>
        <svg width="16" height="16" viewBox="0 0 16 16" fill="none" stroke="#d6ecfb" strokeWidth="1.200"><path d="M0 0h16v16H0z" fill="#1b6fb8" stroke="none" /><circle cx="8" cy="8" r="6" /><circle cx="8" cy="8" r="3.300" /><path d="M8 8l3-3" /></svg>
        <Fit w={27} className="ml-[26px] text-[12px] text-white">09:47</Fit>
        <span className="mr-px ml-[18px] h-7 w-[14px] border border-[#666] bg-linear-to-b from-[#444] to-[#111]" />
      </div>
    </footer>
  );
}

export default function App() {
  return (
    <main className="relative h-[1080px] w-[1920px] overflow-hidden bg-black font-['Liberation_Sans',Arial,sans-serif]">
      <ChartWindow />
      <SidePanel />
      <StatusBar />
      <Taskbar />
    </main>
  );
}
